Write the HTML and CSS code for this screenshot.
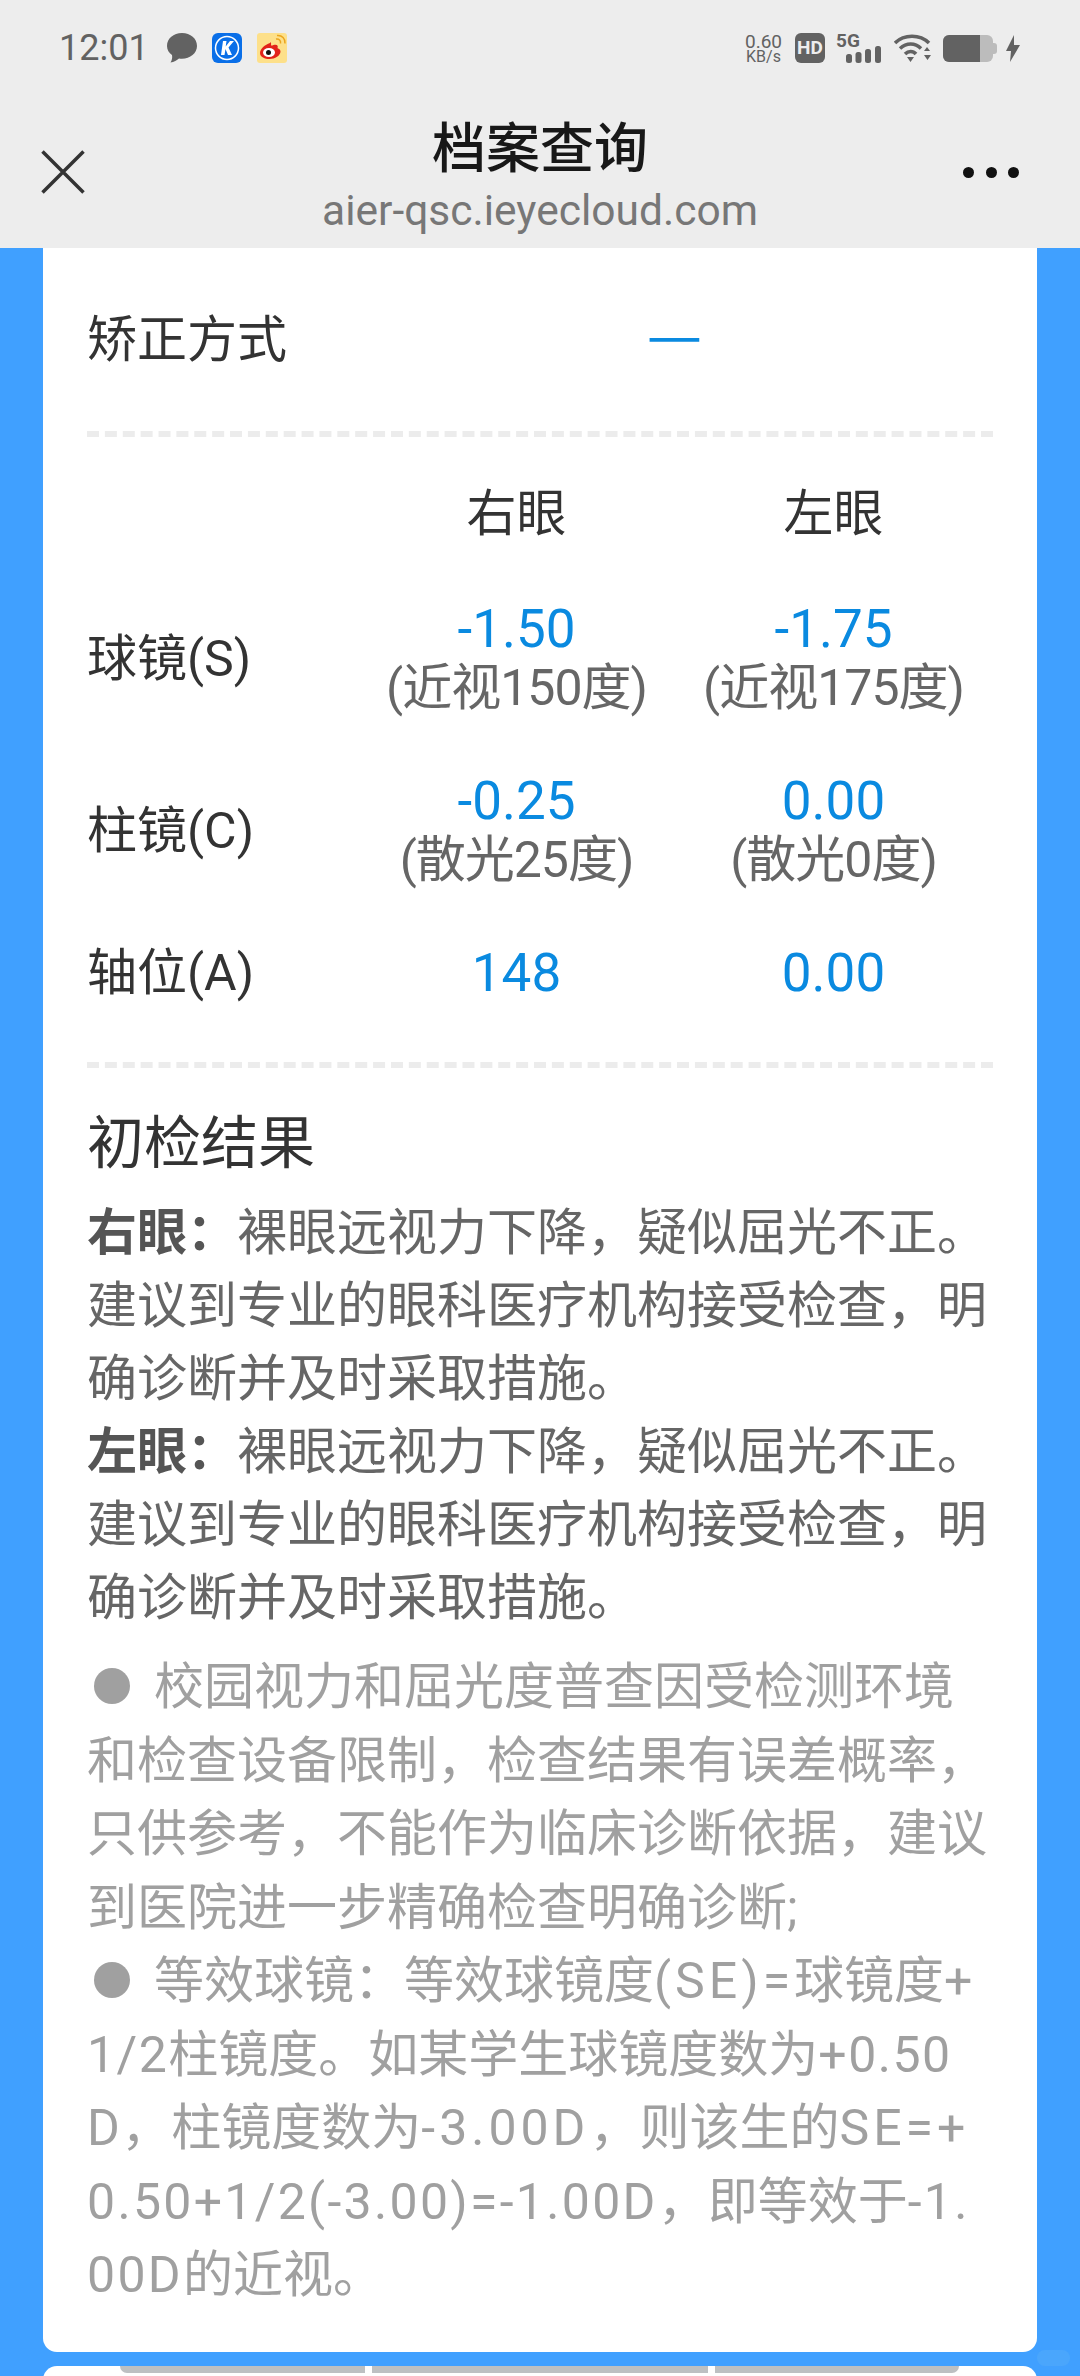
FILE: index.html
```html
<!DOCTYPE html>
<html lang="zh-CN">
<head>
  <meta charset="UTF-8">
  <meta name="viewport" content="width=device-width, initial-scale=1.0">
  <title>档案查询</title>
  <link rel="stylesheet" href="styles.css">
</head>
<body>
  <div class="header">
    <div class="statusbar">
      <div class="status-left">
        <span class="time">12:01</span>
        <svg class="bubble" width="30" height="30" viewBox="0 0 30 30"><path d="M15 0C6.500 0 0 5.500 0 13c0 4 2 7 5 9 .5 2.500 0 5-1.500 7.500 3.500-.5 6.500-2.500 8.500-4 9.500 1.500 18-4.500 18-12.500C30 5.500 23.500 0 15 0z" fill="#626262"/></svg>
        <svg class="app-icon" width="30" height="30" viewBox="0 0 30 30"><rect width="30" height="30" rx="6" fill="#0a6fe8"/><circle cx="15" cy="15" r="11.500" fill="none" stroke="#fff" stroke-width="1.500"/><path d="M11 8h3.500l-.8 5.500L18 8h4l-5.500 6.500L20 22h-4l-2.500-6-1 6H9z" fill="#fff"/></svg>
        <svg class="app-icon" width="30" height="30" viewBox="0 0 30 30"><rect width="30" height="30" rx="3" fill="#fde08a"/><path d="M13 10c-5 1.500-10 6-10 10 0 4 5 6 9.500 6 5.500 0 11-3.500 11-7.500 0-2.500-2.500-3-3-3.500 1-2.500-.5-4-4-3-1.500.5-2.500 1-2.500 0 .5-2-.5-3-1-2.500z" fill="#e2231a"/><ellipse cx="12" cy="19.500" rx="6" ry="4.500" fill="#fff"/><circle cx="11.500" cy="19.500" r="2.500" fill="#111"/><path d="M19 6c3-.5 5 1.500 4.500 4.500M20 2.500c5-.5 8.500 3 8 8" fill="none" stroke="#eba51e" stroke-width="1.500"/></svg>
      </div>
      <div class="status-right">
        <div class="speed"><span>0.60</span><span class="speed-unit">KB/s</span></div>
        <div class="hd">HD</div>
        <div class="signal">
          <span class="five-g">5G</span>
          <svg width="35" height="17" viewBox="0 0 35 17"><rect x="0" y="8" width="6" height="9" rx="2.500" fill="#626262"/><rect x="9.500" y="6" width="6" height="11" rx="2.500" fill="#626262"/><rect x="19" y="3" width="6" height="14" rx="2.500" fill="#626262"/><rect x="29" y="0" width="6" height="17" rx="2.500" fill="#626262"/></svg>
        </div>
        <svg class="wifi" width="37" height="29" viewBox="0 0 37 29"><path d="M1 9C10 0 26 0 35 9" fill="none" stroke="#626262" stroke-width="3.500"/><path d="M6 14.500c6.500-6 15-6 21 0" fill="none" stroke="#626262" stroke-width="3.500"/><path d="M11 20c3.500-3.500 8-3.500 11 0" fill="none" stroke="#626262" stroke-width="3.500"/><path d="M13 23h7l-3.500 5zM30 17l3-4 3 4zM30 21h7l-3.500 5z" fill="#626262"/></svg>
        <div class="battery"><div class="battery-level"></div></div>
        <svg class="bolt" width="14" height="27" viewBox="0 0 14 27"><path d="M8 0 0 16h5l-1 11 10-17H8z" fill="#626262"/></svg>
      </div>
    </div>
    <div class="navbar">
      <svg class="close" width="44" height="44" viewBox="0 0 44 44"><path d="M1.500 1.500 42.500 42.500M42.500 1.500 1.500 42.500" stroke="#333" stroke-width="3.500"/></svg>
      <div class="nav-title">
        <div class="page-title">档案查询</div>
        <div class="page-url">aier-qsc.ieyecloud.com</div>
      </div>
      <div class="more"><i></i><i></i><i></i></div>
    </div>
  </div>

  <div class="content">
    <div class="card">
      <div class="method-row">
        <div class="label">矫正方式</div>
        <div class="method-value">—</div>
      </div>

      <div class="eye-table">
        <div class="cell"></div>
        <div class="cell eye-name">右眼</div>
        <div class="cell eye-name">左眼</div>

        <div class="label">球镜(S)</div>
        <div class="cell"><div class="num">-1.50</div><div class="note">(近视150度)</div></div>
        <div class="cell"><div class="num">-1.75</div><div class="note">(近视175度)</div></div>

        <div class="label">柱镜(C)</div>
        <div class="cell"><div class="num">-0.25</div><div class="note">(散光25度)</div></div>
        <div class="cell"><div class="num">0.00</div><div class="note">(散光0度)</div></div>

        <div class="label">轴位(A)</div>
        <div class="cell"><div class="num">148</div></div>
        <div class="cell"><div class="num">0.00</div></div>
      </div>

      <div class="result">
        <h3>初检结果</h3>
        <p><b>右眼：</b>裸眼远视力下降，疑似屈光不正。建议到专业的眼科医疗机构接受检查，明确诊断并及时采取措施。</p>
        <p><b>左眼：</b>裸眼远视力下降，疑似屈光不正。建议到专业的眼科医疗机构接受检查，明确诊断并及时采取措施。</p>
      </div>

      <div class="tips">
        <p><i class="dot"></i>校园视力和屈光度普查因受检测环境和检查设备限制，检查结果有误差概率，只供参考，不能作为临床诊断依据，建议到医院进一步精确检查明确诊断;</p>
        <p><i class="dot"></i>等效球镜<span class="colon">：</span>等效球镜度<span class="latin-wide">(SE)=</span>球镜度<span class="latin">+</span><br><span class="latin-tight">1/2</span>柱镜度。如某学生球镜度数为<span class="latin-tight">+0.50 D</span>，柱镜度数为<span class="latin-wide">-3.00D</span>，则该生的<span class="latin-wide">SE=+</span><br><span class="latin">0.50+1/2(-3.00)=-1.00D</span>，即等效于<span class="latin">-1.</span><br><span class="latin">00D</span>的近视。</p>
      </div>
    </div>

    <div class="card next-card">
      <div class="tabs"><span></span><span></span><span></span></div>
    </div>
  </div>
  <div class="float-btn"></div>
</body>
</html>
```

FILE: styles.css
```css
* {
  margin: 0;
  padding: 0;
  box-sizing: border-box;
}

body {
  position: relative;
  width: 1080px;
  height: 2376px;
  overflow: hidden;
  font-family: "Roboto", "Noto Sans CJK SC", sans-serif;
  background-color: #40a0ff;
  color: #333;
}

.header {
  height: 248px;
  background-color: #ededed;
}

.statusbar {
  height: 96px;
  padding: 33px 60px 0 59px;
  display: flex;
  justify-content: space-between;
  align-items: flex-start;
}

.status-left {
  display: flex;
  align-items: center;
  gap: 15px;
  height: 30px;
}

.time {
  font-size: 36px;
  color: #626262;
  margin-right: 3px;
}

.status-right {
  display: flex;
  align-items: center;
  height: 30px;
}

.speed {
  display: flex;
  flex-direction: column;
  align-items: center;
  width: 37px;
  font-size: 19px;
  line-height: 17px;
  color: #626262;
  margin-right: 13px;
}

.speed-unit {
  font-size: 16px;
  line-height: 14px;
}

.hd {
  width: 30px;
  height: 30px;
  border-radius: 6px;
  background-color: #626262;
  color: #ededed;
  font-size: 19px;
  font-weight: bold;
  line-height: 30px;
  text-align: center;
  margin-right: 11px;
}

.signal {
  position: relative;
  width: 45px;
  height: 30px;
  display: flex;
  justify-content: flex-end;
  align-items: flex-end;
  margin-right: 13px;
}

.five-g {
  position: absolute;
  left: 0;
  top: -2px;
  font-size: 19px;
  line-height: 20px;
  font-weight: bold;
  color: #626262;
}

.wifi {
  margin-right: 12px;
}

.battery {
  position: relative;
  width: 50px;
  height: 27px;
  border-radius: 6px;
  background-color: #bcbcbc;
  margin-right: 13px;
}

.battery::after {
  content: "";
  position: absolute;
  right: -4px;
  top: 8px;
  width: 4px;
  height: 11px;
  border-radius: 0 3px 3px 0;
  background-color: #bcbcbc;
}

.battery-level {
  width: 37px;
  height: 100%;
  border-radius: 6px 0 0 6px;
  background-color: #626262;
}

.navbar {
  height: 152px;
  padding: 0 41px;
  display: grid;
  grid-template-columns: 1fr auto 1fr;
  align-items: center;
}

.nav-title {
  text-align: center;
  padding-top: 10px;
}

.page-title {
  font-size: 54px;
  font-weight: 500;
  color: #181818;
  line-height: 68px;
}

.page-url {
  font-size: 42.500px;
  color: #777;
  line-height: 54px;
}

.more {
  display: flex;
  justify-content: flex-end;
  gap: 11.500px;
  margin-right: 20px;
}

.more i {
  width: 11px;
  height: 11px;
  border-radius: 50%;
  background-color: #111;
}

.content {
  padding: 0 43px;
}

.card {
  background-color: #fff;
  border-radius: 0 0 14px 14px;
  padding: 0 44px;
  height: 2104px;
}

.next-card {
  height: 60px;
  margin-top: 14px;
  border-radius: 14px 14px 0 0;
  padding: 0 78px 0 77px;
}

.tabs {
  display: flex;
  gap: 7px;
  height: 7px;
}

.tabs span {
  background-color: #bdc0c2;
  height: 7px;
  flex: 245;
}

.tabs span:first-child {
  border-radius: 0 0 0 7px;
}

.tabs span:nth-child(2) {
  flex: 336;
}

.tabs span:last-child {
  flex: 244;
  border-radius: 0 0 7px 0;
}

/* faint floating pill over the right margin */
.float-btn {
  position: absolute;
  right: 10px;
  top: 2350px;
  width: 33px;
  height: 16px;
  border-radius: 8px;
  background-color: #4aa6fc;
}

.label {
  font-size: 50px;
  line-height: 60px;
  color: #333;
}

.method-row {
  height: 189px;
  display: grid;
  grid-template-columns: 271px 1fr;
  align-items: center;
  border-bottom: 6px dashed #ececec;
}

.method-value {
  text-align: center;
  font-family: "Noto Sans CJK SC", sans-serif;
  font-size: 62px;
  line-height: 60px;
  color: #0a8ae0;
  padding-bottom: 20px;
  padding-right: 2px;
}

.eye-table {
  display: grid;
  grid-template-columns: 271px 317px 317px;
  grid-template-rows: 136px 172px 172px 112px;
  align-items: center;
  padding-bottom: 33px;
  border-bottom: 6px dashed #ececec;
}

.cell {
  text-align: center;
}

.eye-name {
  font-size: 50px;
  line-height: 60px;
  color: #333;
  padding-top: 18px;
}

.num {
  font-size: 53px;
  line-height: 58px;
  color: #0a8ae0;
}

.note {
  font-size: 50px;
  line-height: 60px;
  letter-spacing: -1px;
  color: #666;
}

.result {
  padding-top: 36px;
}

.result h3 {
  font-size: 57px;
  font-weight: 400;
  color: #333;
  line-height: 80px;
  margin-bottom: 13px;
}

.result p {
  font-size: 50px;
  line-height: 73px;
  color: #666;
}

.result b {
  font-family: "Noto Sans CJK TC", sans-serif;
  line-height: 1;
  color: #555;
}

.tips {
  margin-top: 16px;
}

.tips p {
  font-size: 50px;
  line-height: 73.500px;
  color: #a0a0a0;
  word-break: break-all;
}

.latin {
  letter-spacing: 2.300px;
}

.latin-wide {
  letter-spacing: 4px;
}

.latin-tight {
  letter-spacing: 1.500px;
}

.colon {
  font-family: "Noto Sans CJK TC", sans-serif;
  line-height: 1;
}

.dot {
  display: inline-block;
  width: 36px;
  height: 36px;
  border-radius: 50%;
  background-color: #a0a0a0;
  margin: 0 24px 0 7px;
}
```
